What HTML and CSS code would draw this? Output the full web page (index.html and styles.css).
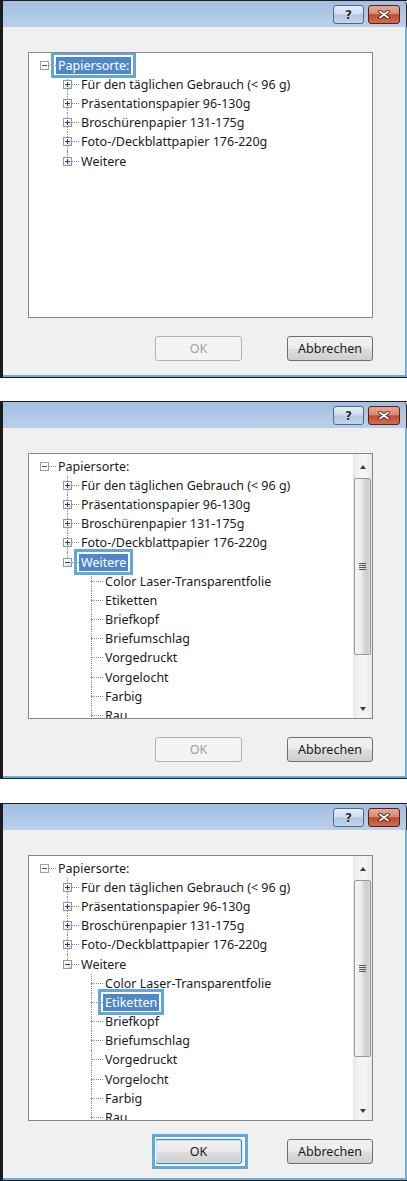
FILE: index.html
```html
<!DOCTYPE html>
<html lang="de">
<head>
  <meta charset="UTF-8" />
  <title>Papiersorte</title>
  <link rel="stylesheet" href="styles.css">
</head>
<body>

  <!-- Schritt 1: Papiersorte markiert -->
  <div class="window">
    <div class="titlebar">
      <span class="cap help">?</span>
      <span class="cap close"><svg width="12" height="9" viewBox="0 0 12 9"><path d="M2 1.5 L10 7.5 M10 1.5 L2 7.5" stroke="#4a1c12" stroke-width="3.6" stroke-linecap="round"/><path d="M2 1.5 L10 7.5 M10 1.5 L2 7.5" stroke="#fff" stroke-width="2" stroke-linecap="round"/></svg></span>
    </div>
    <div class="client">
      <div class="tree">
        <ul class="nodes">
          <li class="row l1"><span class="exp minus grey"></span><span class="dash"></span><span class="label sel">Papiersorte:</span></li>
          <li class="row l2"><span class="exp plus"></span><span class="dash"></span><span class="label">Für den täglichen Gebrauch (&lt; 96 g)</span></li>
          <li class="row l2"><span class="exp plus"></span><span class="dash"></span><span class="label">Präsentationspapier 96-130g</span></li>
          <li class="row l2"><span class="exp plus"></span><span class="dash"></span><span class="label">Broschürenpapier 131-175g</span></li>
          <li class="row l2"><span class="exp plus"></span><span class="dash"></span><span class="label">Foto-/Deckblattpapier 176-220g</span></li>
          <li class="row l2 last"><span class="exp plus"></span><span class="dash"></span><span class="label">Weitere</span></li>
        </ul>
      </div>
      <div class="actions">
        <button class="btn" disabled>OK</button>
        <button class="btn">Abbrechen</button>
      </div>
    </div>
  </div>

  <!-- Schritt 2: Weitere aufgeklappt -->
  <div class="window">
    <div class="titlebar">
      <span class="cap help">?</span>
      <span class="cap close"><svg width="12" height="9" viewBox="0 0 12 9"><path d="M2 1.5 L10 7.5 M10 1.5 L2 7.5" stroke="#4a1c12" stroke-width="3.6" stroke-linecap="round"/><path d="M2 1.5 L10 7.5 M10 1.5 L2 7.5" stroke="#fff" stroke-width="2" stroke-linecap="round"/></svg></span>
    </div>
    <div class="client">
      <div class="tree">
        <ul class="nodes">
          <li class="row l1"><span class="exp minus grey"></span><span class="dash"></span><span class="label">Papiersorte:</span></li>
          <li class="row l2"><span class="exp plus"></span><span class="dash"></span><span class="label">Für den täglichen Gebrauch (&lt; 96 g)</span></li>
          <li class="row l2"><span class="exp plus"></span><span class="dash"></span><span class="label">Präsentationspapier 96-130g</span></li>
          <li class="row l2"><span class="exp plus"></span><span class="dash"></span><span class="label">Broschürenpapier 131-175g</span></li>
          <li class="row l2"><span class="exp plus"></span><span class="dash"></span><span class="label">Foto-/Deckblattpapier 176-220g</span></li>
          <li class="row l2 last"><span class="exp minus"></span><span class="dash"></span><span class="label sel">Weitere</span></li>
          <li class="row l3"><span class="dash long"></span><span class="label">Color Laser-Transparentfolie</span></li>
          <li class="row l3"><span class="dash long"></span><span class="label">Etiketten</span></li>
          <li class="row l3"><span class="dash long"></span><span class="label">Briefkopf</span></li>
          <li class="row l3"><span class="dash long"></span><span class="label">Briefumschlag</span></li>
          <li class="row l3"><span class="dash long"></span><span class="label">Vorgedruckt</span></li>
          <li class="row l3"><span class="dash long"></span><span class="label">Vorgelocht</span></li>
          <li class="row l3"><span class="dash long"></span><span class="label">Farbig</span></li>
          <li class="row l3"><span class="dash long"></span><span class="label">Rau</span></li>
        </ul>
        <div class="scrollbar">
          <div class="arrow up"></div>
          <div class="thumb"><span class="grip"></span></div>
          <div class="arrow down"></div>
        </div>
      </div>
      <div class="actions">
        <button class="btn" disabled>OK</button>
        <button class="btn">Abbrechen</button>
      </div>
    </div>
  </div>

  <!-- Schritt 3: Etiketten gewählt, OK -->
  <div class="window third">
    <div class="titlebar">
      <span class="cap help">?</span>
      <span class="cap close"><svg width="12" height="9" viewBox="0 0 12 9"><path d="M2 1.5 L10 7.5 M10 1.5 L2 7.5" stroke="#4a1c12" stroke-width="3.6" stroke-linecap="round"/><path d="M2 1.5 L10 7.5 M10 1.5 L2 7.5" stroke="#fff" stroke-width="2" stroke-linecap="round"/></svg></span>
    </div>
    <div class="client">
      <div class="tree">
        <ul class="nodes">
          <li class="row l1"><span class="exp minus grey"></span><span class="dash"></span><span class="label">Papiersorte:</span></li>
          <li class="row l2"><span class="exp plus"></span><span class="dash"></span><span class="label">Für den täglichen Gebrauch (&lt; 96 g)</span></li>
          <li class="row l2"><span class="exp plus"></span><span class="dash"></span><span class="label">Präsentationspapier 96-130g</span></li>
          <li class="row l2"><span class="exp plus"></span><span class="dash"></span><span class="label">Broschürenpapier 131-175g</span></li>
          <li class="row l2"><span class="exp plus"></span><span class="dash"></span><span class="label">Foto-/Deckblattpapier 176-220g</span></li>
          <li class="row l2 last"><span class="exp minus"></span><span class="dash"></span><span class="label">Weitere</span></li>
          <li class="row l3"><span class="dash long"></span><span class="label">Color Laser-Transparentfolie</span></li>
          <li class="row l3"><span class="dash long"></span><span class="label sel">Etiketten</span></li>
          <li class="row l3"><span class="dash long"></span><span class="label">Briefkopf</span></li>
          <li class="row l3"><span class="dash long"></span><span class="label">Briefumschlag</span></li>
          <li class="row l3"><span class="dash long"></span><span class="label">Vorgedruckt</span></li>
          <li class="row l3"><span class="dash long"></span><span class="label">Vorgelocht</span></li>
          <li class="row l3"><span class="dash long"></span><span class="label">Farbig</span></li>
          <li class="row l3"><span class="dash long"></span><span class="label">Rau</span></li>
        </ul>
        <div class="scrollbar">
          <div class="arrow up"></div>
          <div class="thumb"><span class="grip"></span></div>
          <div class="arrow down"></div>
        </div>
      </div>
      <div class="actions">
        <button class="btn marked">OK</button>
        <button class="btn">Abbrechen</button>
      </div>
    </div>
  </div>

</body>
</html>
```

FILE: styles.css
```css
body {
  margin: 0;
  background: #fff;
  font-family: "Noto Sans", "Open Sans", sans-serif;
  font-size: 12.5px;
  color: #1a1a1a;
  display: flex;
  flex-direction: column;
  gap: 23px;
}
.window {
  width: 407px;
  height: 378px;
  box-sizing: border-box;
  border-top: 1px solid #1e1e1e;
  border-left: 3px solid #1b1b1b;
  border-bottom: 1px solid #1b1b1b;
  background: #f0f0f0;
  display: flex;
  flex-direction: column;
  flex-shrink: 0;
}
.window.third {
  margin-top: 1px;
}
.titlebar {
  height: 26px;
  box-sizing: border-box;
  background: linear-gradient(#a2bfe1, #b9d0ea);
  border-right: 1px solid #2a2a2a;
  border-top-right-radius: 4px;
  display: flex;
  justify-content: flex-end;
  align-items: flex-start;
  gap: 4px;
  padding: 4px 6px 0 0;
}
.cap {
  width: 31px;
  height: 19px;
  box-sizing: border-box;
  border: 1px solid #56687f;
  border-radius: 3px;
  display: flex;
  align-items: center;
  justify-content: center;
}
.help {
  background: linear-gradient(#e4edf8 0%, #cddcef 48%, #afc5e0 52%, #c2d5ec 100%);
  color: #2a2a2a;
  font-family: "DejaVu Sans", sans-serif;
  font-weight: bold;
  font-size: 12px;
  text-shadow: 0 0 1px #fff, 0 0 1px #fff;
}
.close {
  width: 32px;
  border-color: #5a2016;
  background: linear-gradient(#e6a896 0%, #d88a74 45%, #c24a30 52%, #cf6c4e 100%);
}
.client {
  flex: 1;
  border-right: 2px solid #6aaede;
  border-bottom: 2px solid #6aaede;
  padding: 25px 0 0 25px;
}
.tree {
  width: 345px;
  height: 266px;
  box-sizing: border-box;
  border: 1px solid #828790;
  background: #fff;
  display: flex;
  overflow: hidden;
}
.nodes {
  flex: 1;
  list-style: none;
  margin: 0;
  padding: 2.5px 0 0 0;
  overflow: hidden;
}
.row {
  position: relative;
  height: 19.2px;
  display: flex;
  align-items: center;
  white-space: nowrap;
}
.l1 { padding-left: 11px; }
.l2 { padding-left: 34px; }
.l3 { padding-left: 62px; }
.l2::before,
.l3::before {
  content: "";
  position: absolute;
  top: 0;
  bottom: 0;
  border-left: 1px dotted #8a8a8a;
}
.l2::before { left: 38px; }
.l3::before { left: 62px; }
.l2.last::before { bottom: 50%; }
.exp {
  position: relative;
  z-index: 1;
  width: 9px;
  height: 9px;
  box-sizing: border-box;
  border: 1px solid #8e9aa8;
  background: linear-gradient(135deg, #fff 35%, #d2d6dc);
  flex-shrink: 0;
}
.exp::before,
.exp.plus::after {
  content: "";
  position: absolute;
  background: #1d3f78;
}
.exp::before {
  left: 1px;
  top: 3px;
  width: 5px;
  height: 1px;
}
.exp.plus::after {
  left: 3px;
  top: 1px;
  width: 1px;
  height: 5px;
}
.exp.grey {
  border-color: #a0a0a0;
  background: #fff;
}
.exp.grey::before { background: #555; }
.dash {
  width: 7px;
  border-top: 1px dotted #8a8a8a;
  flex-shrink: 0;
}
.dash.long { width: 12px; }
.label {
  padding: 0 2px;
  line-height: 17px;
}
.label.sel {
  position: relative;
  z-index: 2;
  background: #4f87c8;
  color: #fff;
}
.label.sel::after {
  content: "";
  position: absolute;
  top: -5px;
  bottom: -4px;
  left: -5px;
  right: -5px;
  border: 3px solid #62a6df;
  box-shadow: inset 0 0 0 1px #fff;
}
.scrollbar {
  width: 19px;
  flex-shrink: 0;
  background: linear-gradient(90deg, #e6e6e6, #f4f4f4 30%, #f4f4f4 70%, #e9e9e9);
  display: flex;
  flex-direction: column;
  align-items: center;
}
.arrow {
  height: 22px;
  width: 100%;
  display: flex;
  align-items: center;
  justify-content: center;
}
.arrow.down {
  margin-top: auto;
  height: 19px;
}
.arrow::before {
  content: "";
  border-left: 3.5px solid transparent;
  border-right: 3.5px solid transparent;
}
.arrow.up::before {
  border-bottom: 4px solid #3c3c3c;
  margin-top: 3px;
}
.arrow.down::before {
  border-top: 4px solid #3c3c3c;
}
.thumb {
  width: 17px;
  height: 177px;
  margin-top: 2px;
  box-sizing: border-box;
  border: 1px solid #979797;
  border-radius: 2px;
  background: linear-gradient(90deg, #f6f6f6 0%, #ececec 45%, #d9d9d9 55%, #cdcdcd 85%, #dedede 100%);
  display: flex;
  align-items: center;
  justify-content: center;
}
.grip {
  width: 7px;
  height: 7px;
  background: repeating-linear-gradient(#555 0 1px, transparent 1px 2px);
}
.actions {
  width: 345px;
  display: flex;
  justify-content: flex-end;
  gap: 45px;
  margin-top: 18px;
}
.btn {
  width: 86px;
  height: 25px;
  border: 1px solid #707070;
  border-radius: 3px;
  background: linear-gradient(#f2f2f2 0%, #ebebeb 48%, #dddddd 52%, #cfcfcf 100%);
  font-family: "Noto Sans", "Open Sans", sans-serif;
  font-size: 12.5px;
  color: #1a1a1a;
  padding: 0;
}
.btn:first-child {
  width: 87px;
}
.btn:disabled {
  border-color: #adb2b5;
  background: #f4f4f4;
  color: #a0a0a0;
}
.btn.marked {
  position: relative;
  border-color: #3c7fb1;
  box-shadow: inset 0 0 0 1px #c8e6f8;
}
.btn.marked::after {
  content: "";
  position: absolute;
  top: -6px;
  bottom: -6px;
  left: -4px;
  right: -7px;
  border: 3px solid #62a6df;
  box-shadow: inset 0 0 0 1px #fff;
}
```
